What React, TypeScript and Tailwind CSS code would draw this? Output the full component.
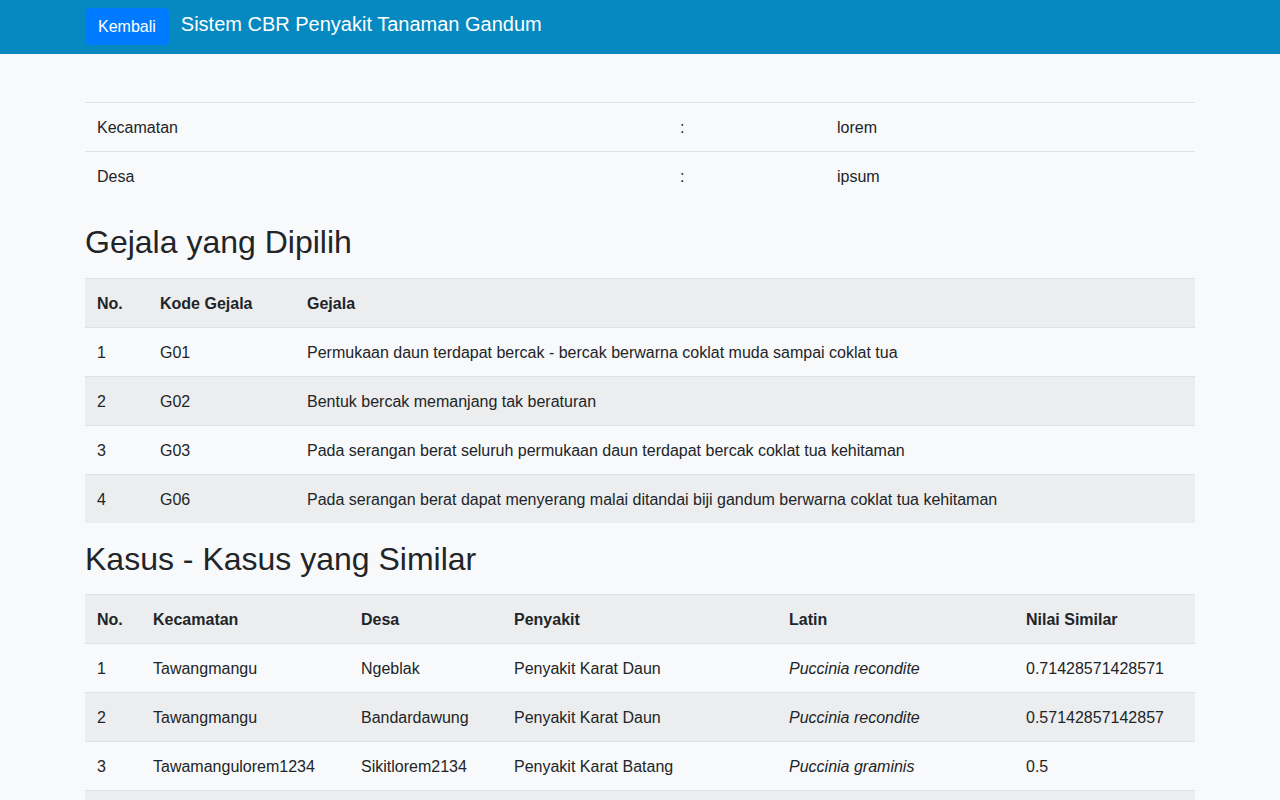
const gejala = [
  { kode: 'G01', teks: 'Permukaan daun terdapat bercak - bercak berwarna coklat muda sampai coklat tua' },
  { kode: 'G02', teks: 'Bentuk bercak memanjang tak beraturan' },
  { kode: 'G03', teks: 'Pada serangan berat seluruh permukaan daun terdapat bercak coklat tua kehitaman' },
  { kode: 'G06', teks: 'Pada serangan berat dapat menyerang malai ditandai biji gandum berwarna coklat tua kehitaman' },
]

const kasus = [
  { kec: 'Tawangmangu', desa: 'Ngeblak', penyakit: 'Penyakit Karat Daun', latin: 'Puccinia recondite', nilai: '0.71428571428571' },
  { kec: 'Tawangmangu', desa: 'Bandardawung', penyakit: 'Penyakit Karat Daun', latin: 'Puccinia recondite', nilai: '0.57142857142857' },
  { kec: 'Tawamangulorem1234', desa: 'Sikitlorem2134', penyakit: 'Penyakit Karat Batang', latin: 'Puccinia graminis', nilai: '0.5' },
  { kec: 'Tawangmangu', desa: 'Kalisoro', penyakit: 'Penyakit Karat Batang', latin: 'Puccinia graminis', nilai: '0.42857142857143' },
]

// baris tabel gaya bootstrap: tinggi 49px, garis atas saja
const td = 'px-3 pt-[13px] pb-[11px] leading-6 border-t border-[#dee2e6] text-left align-top'
const th = 'px-3 pt-[13px] pb-[11px] leading-6 border-t border-[#dee2e6] text-left align-top font-bold'

export default function App() {
  return (
    <div className="min-h-screen bg-[#f8f9fa] text-[#212529] text-base" style={{ fontFamily: '"Liberation Sans", Arial, sans-serif' }}>
      <nav className="bg-[#0589c0] h-[54px] flex items-start">
        <div className="w-[1110px] mx-auto flex items-start gap-3 pt-2">
          <button className="bg-[#007bff] text-white rounded px-3 pt-[1px] h-[37px] leading-6 border border-[#007bff]">Kembali</button>
          <span className="text-white text-[20px] leading-[30px] pt-[1px]">Sistem CBR Penyakit Tanaman Gandum</span>
        </div>
      </nav>

      <div className="w-[1110px] mx-auto pt-12">
        <table className="w-full border-collapse mb-[23px]">
          <tbody>
            <tr>
              <td className={`${td} w-[583px]`}>Kecamatan</td>
              <td className={`${td} w-[157px]`}>:</td>
              <td className={td}>lorem</td>
            </tr>
            <tr>
              <td className={td}>Desa</td>
              <td className={td}>:</td>
              <td className={td}>ipsum</td>
            </tr>
          </tbody>
        </table>

        <h2 className="text-[32px] leading-[38px] font-normal mb-[17px]">Gejala yang Dipilih</h2>
        <table className="w-full border-collapse mb-[17px]">
          <tbody>
            <tr className="bg-[#ecedee]">
              <th className={`${th} w-[63px]`}>No.</th>
              <th className={`${th} w-[147px]`}>Kode Gejala</th>
              <th className={th}>Gejala</th>
            </tr>
            {gejala.map((g, i) => (
              <tr key={g.kode} className={i % 2 === 1 ? 'bg-[#ecedee]' : ''}>
                <td className={td}>{i + 1}</td>
                <td className={td}>{g.kode}</td>
                <td className={td}>{g.teks}</td>
              </tr>
            ))}
          </tbody>
        </table>

        <h2 className="text-[32px] leading-[38px] font-normal mb-4">Kasus - Kasus yang Similar</h2>
        <table className="w-full border-collapse mb-4">
          <tbody>
            <tr className="bg-[#ecedee]">
              <th className={`${th} w-[56px]`}>No.</th>
              <th className={`${th} w-[208px]`}>Kecamatan</th>
              <th className={`${th} w-[153px]`}>Desa</th>
              <th className={`${th} w-[275px]`}>Penyakit</th>
              <th className={`${th} w-[237px]`}>Latin</th>
              <th className={th}>Nilai Similar</th>
            </tr>
            {kasus.map((k, i) => (
              <tr key={i} className={i % 2 === 1 ? 'bg-[#ecedee]' : ''}>
                <td className={td}>{i + 1}</td>
                <td className={td}>{k.kec}</td>
                <td className={td}>{k.desa}</td>
                <td className={td}>{k.penyakit}</td>
                <td className={`${td} italic`}>{k.latin}</td>
                <td className={td}>{k.nilai}</td>
              </tr>
            ))}
          </tbody>
        </table>
      </div>
    </div>
  )
}
